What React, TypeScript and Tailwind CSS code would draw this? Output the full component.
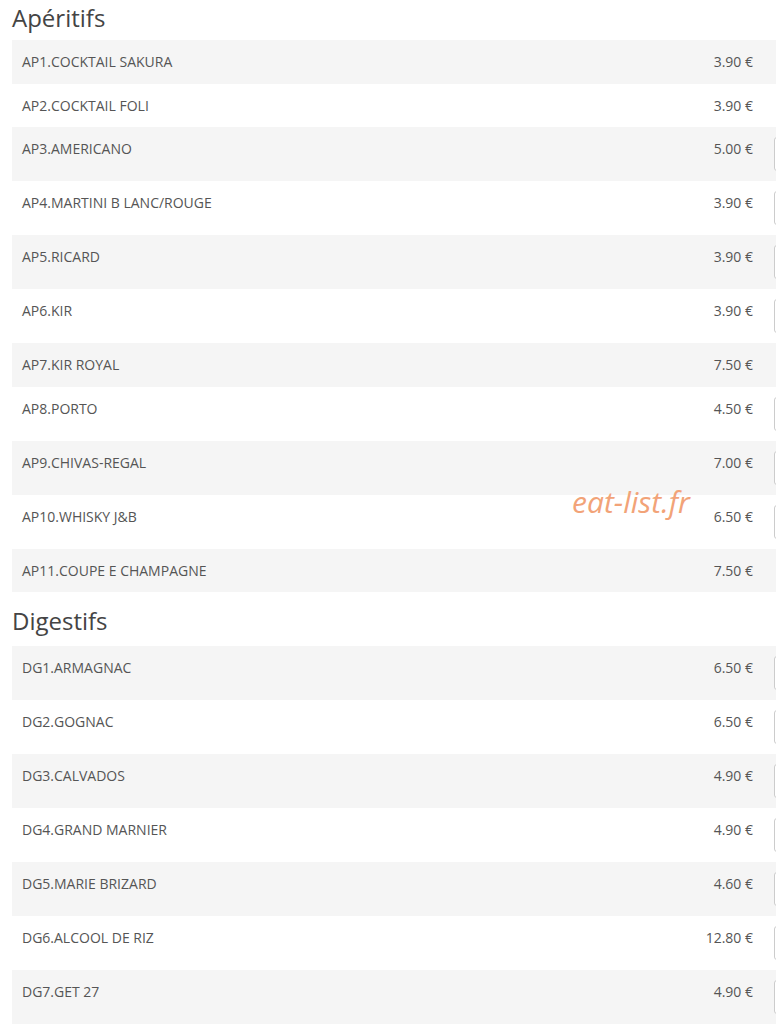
import React from 'react';

type Item = { name: string; price: string; qty?: boolean };

const aperitifs: Item[] = [
  { name: 'AP1.COCKTAIL SAKURA', price: '3.90 €' },
  { name: 'AP2.COCKTAIL FOLI', price: '3.90 €' },
  { name: 'AP3.AMERICANO', price: '5.00 €', qty: true },
  { name: 'AP4.MARTINI B LANC/ROUGE', price: '3.90 €', qty: true },
  { name: 'AP5.RICARD', price: '3.90 €', qty: true },
  { name: 'AP6.KIR', price: '3.90 €', qty: true },
  { name: 'AP7.KIR ROYAL', price: '7.50 €' },
  { name: 'AP8.PORTO', price: '4.50 €', qty: true },
  { name: 'AP9.CHIVAS-REGAL', price: '7.00 €', qty: true },
  { name: 'AP10.WHISKY J&B', price: '6.50 €', qty: true },
  { name: 'AP11.COUPE E CHAMPAGNE', price: '7.50 €' },
];

const digestifs: Item[] = [
  { name: 'DG1.ARMAGNAC', price: '6.50 €', qty: true },
  { name: 'DG2.GOGNAC', price: '6.50 €', qty: true },
  { name: 'DG3.CALVADOS', price: '4.90 €', qty: true },
  { name: 'DG4.GRAND MARNIER', price: '4.90 €', qty: true },
  { name: 'DG5.MARIE BRIZARD', price: '4.60 €', qty: true },
  { name: 'DG6.ALCOOL DE RIZ', price: '12.80 €', qty: true },
  { name: 'DG7.GET 27', price: '4.90 €', qty: true },
];

function MenuRow({ item, index }: { item: Item; index: number }) {
  return (
    <div className={`flex items-start w-[840px] py-[10px] pl-[10px] pr-[18px] text-[14px] leading-[23.5px] text-[#555] ${index % 2 === 0 ? 'bg-[#f5f5f5]' : 'bg-white'}`}>
      <div className="flex-1">{item.name}</div>
      <div className="text-right">{item.price}</div>
      <div className="ml-[21px] w-[60px]">
        {item.qty && <div className="h-[34px] border border-[#ccc] rounded-[3px] bg-white" />}
      </div>
    </div>
  );
}

function Section({ title, items, first }: { title: string; items: Item[]; first?: boolean }) {
  return (
    <div>
      <h2 className={`text-[24px] leading-[30px] pt-[3px] text-[#444] ${first ? 'mb-[7px]' : 'mt-[11px] mb-[10px]'}`}>{title}</h2>
      {items.map((item, i) => (
        <MenuRow key={item.name} item={item} index={i} />
      ))}
    </div>
  );
}

export default function App() {
  return (
    <div className="relative w-[776px] h-[1034px] overflow-hidden bg-white pl-[12px] font-['Open_Sans',sans-serif]">
      <Section title="Apéritifs" items={aperitifs} first />
      <Section title="Digestifs" items={digestifs} />
      {/* watermark */}
      <div className="absolute left-[572px] top-[479px] text-[30px] italic text-[#f2a378]">eat-list.fr</div>
    </div>
  );
}
